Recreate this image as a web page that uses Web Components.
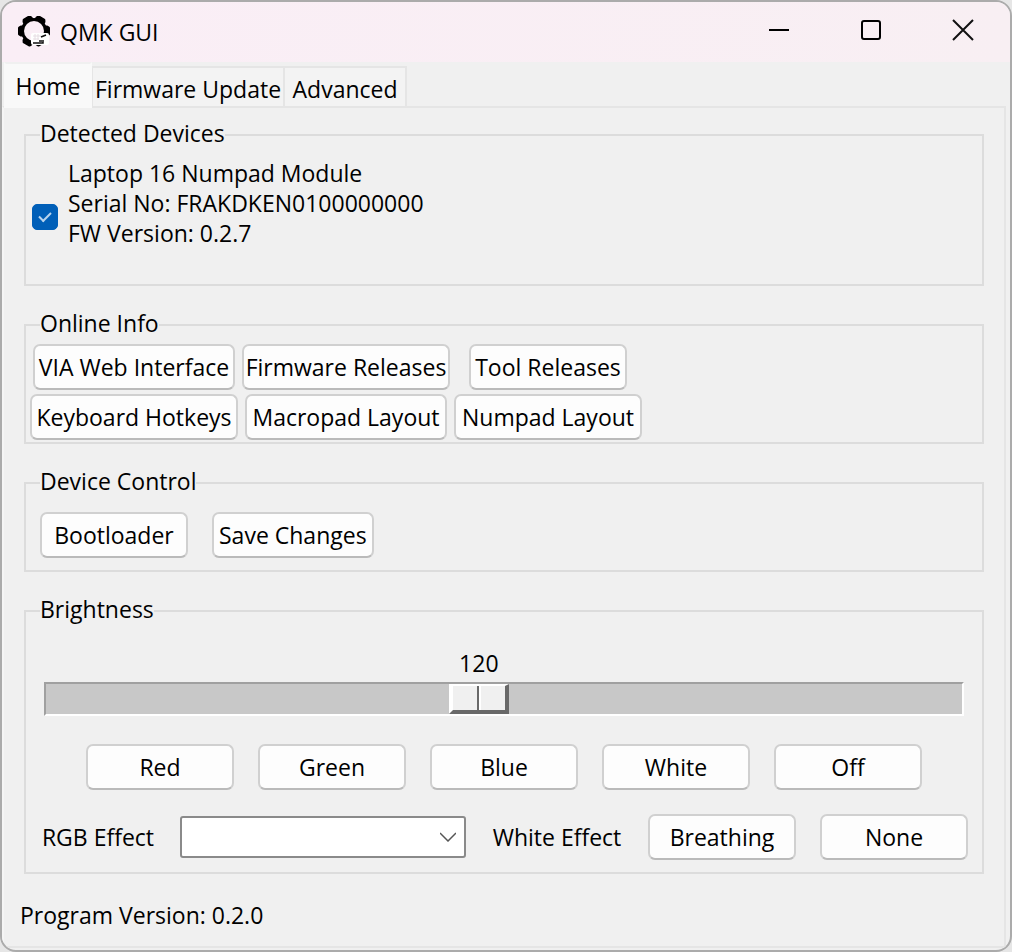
<!DOCTYPE html>
<html lang="en">
<head>
<meta charset="utf-8">
<title>QMK GUI</title>
<style>
html { height: 100%; background: #e6e6e6; }
body { margin: 0; min-height: 100%; display: flex; font: 23px/30px "Open Sans", "Noto Sans", sans-serif; color: #000; }
</style>
</head>
<body>
<qmk-app></qmk-app>
<script>
const define = (name, html, setup) => {
  const tpl = document.createElement('template');
  tpl.innerHTML = html;
  customElements.define(name, class extends HTMLElement {
    constructor() {
      super();
      this.attachShadow({ mode: 'open', delegatesFocus: true }).append(tpl.content.cloneNode(true));
    }
    connectedCallback() { if (setup) setup(this, this.shadowRoot); }
  });
};

define('push-button', `
<style>
:host { display: block; }
button { box-sizing: border-box; width: 100%; height: 46px; padding: 0 var(--button-padding, 6px); margin: 0; font: inherit; color: inherit; white-space: nowrap;
  background: #fdfdfd; border: 2px solid #d0d0d0; border-bottom-color: #bababa; border-radius: 7px; }
button:active { background: #f5f5f5; }
</style>
<button type="button"><slot></slot></button>`);

define('title-bar', `
<style>
:host { display: flex; align-items: center; height: 60px; padding: 0 1px 0 16px; background: linear-gradient(90deg, #faeef6, #f8eff3); }
.logo { width: 32px; height: 32px; flex: none; }
h1 { flex: 1; margin: 0 0 0 10px; font-size: 23px; line-height: 30px; font-weight: 400; }
button { align-self: flex-start; width: 92px; height: 56px; padding: 0; border: 0; background: none; }
button svg { display: block; margin: auto; }
</style>
<svg class="logo" viewBox="0 0 32 32" aria-hidden="true">
  <g transform="translate(16 15)" stroke="#000" stroke-linejoin="round" stroke-width="3">
    <path id="tooth" d="M-13 -4L-14.5 -3V3L-13 4H13L14.5 3V-3L13 -4Z"/>
    <path transform="rotate(60)" d="M-13 -4L-14.5 -3V3L-13 4H13L14.5 3V-3L13 -4Z"/>
    <path transform="rotate(120)" d="M-13 -4L-14.5 -3V3L-13 4H13L14.5 3V-3L13 -4Z"/>
    <circle r="11.5"/>
  </g>
  <circle cx="16" cy="15" r="10" fill="#faeef6"/>
  <rect x="13" y="17" width="18" height="12" rx="2" fill="#fff"/>
  <path d="M15 20h8M15 23h6M17 18v6M20 18v6" stroke="#e6dde3"/>
  <path d="M15 27h10V24M21 25h3M23 21l5-2" fill="none" stroke="#111" stroke-width="1.5"/>
</svg>
<h1>QMK GUI</h1>
<button type="button" aria-label="Minimize"><svg width="22" height="22"><path d="M1 11H21" stroke="#000" stroke-width="2"/></svg></button>
<button type="button" aria-label="Maximize"><svg width="22" height="22"><rect x="2" y="2" width="18" height="18" rx="2" fill="none" stroke="#000" stroke-width="2"/></svg></button>
<button type="button" aria-label="Close"><svg width="22" height="22"><path d="M1 1L21 21M21 1L1 21" stroke="#111" stroke-width="2"/></svg></button>`);

define('tab-bar', `
<style>
:host { display: flex; align-items: flex-end; height: 44px; padding-left: 2px; }
::slotted(button) { height: 42px; min-width: 124px; padding: 4px 2px 0; margin: 0 -2px -2px 0; font: inherit; color: inherit; white-space: nowrap; background: #f3f3f3; border: 2px solid #e5e5e5; }
::slotted(button[aria-selected="true"]) { height: 46px; min-width: 88px; padding: 2px 8px 0; margin: 0 -1px -2px 0; border-color: #f0f0f0 #f9f9f9 #f9f9f9; background: #f9f9f9; position: relative; }
</style>
<slot></slot>`);

define('group-box', `
<style>
:host { display: block; }
fieldset { box-sizing: border-box; min-width: 0; margin: 0; padding: var(--group-padding, 0); border: 2px solid #dcdcdc; }
legend { padding: 0; margin-left: var(--legend-indent, 0); height: 30px; line-height: 26px; }
</style>
<fieldset><legend></legend><slot></slot></fieldset>`,
(el, root) => { root.querySelector('legend').textContent = el.getAttribute('label'); });

define('device-item', `
<style>
:host { display: block; }
label { display: flex; align-items: center; gap: 10px; }
span { min-height: 118px; }
input { appearance: none; flex: none; display: grid; place-items: center; width: 26px; height: 26px; margin: 0; border: 1px solid #8a8a8a; border-radius: 5px; background: #fff; }
input:checked { border-color: #005fb8; background: #005fb8; }
input:checked::before { content: ""; width: 10px; height: 5px; border: solid #b8d4ee; border-width: 0 0 2px 2px; transform: translateY(-2px) rotate(-45deg); }
</style>
<label><input type="checkbox" checked><span><slot></slot></span></label>`);

define('level-slider', `
<style>
:host { display: block; }
output { display: block; width: 60px; margin-left: calc(2px + (100% - 64px) * var(--level)); text-align: center; }
input { appearance: none; display: block; box-sizing: border-box; width: 100%; height: 34px; margin: 4px 0 0; border: 2px solid; border-color: #a0a0a0 #fff #fff #a0a0a0; background: #c8c8c8; }
input::-webkit-slider-thumb { appearance: none; box-sizing: border-box; width: 60px; height: 30px; border: solid; border-color: #fff #696969 #696969 #fff;
  border-width: 2px 4px 4px 4px; background: linear-gradient(#696969, #696969) 24px 0 / 2px 100% no-repeat, linear-gradient(#fff, #fff) 26px 0 / 2px 100% no-repeat, #f0f0f0; }
</style>
<output></output>
<input type="range" min="0" max="255" value="120" aria-label="Brightness">`,
(el, root) => {
  const input = root.querySelector('input');
  const sync = () => {
    root.querySelector('output').textContent = input.value;
    el.style.setProperty('--level', input.value / 255);
  };
  input.addEventListener('input', sync);
  sync();
});

define('effect-row', `
<style>
:host { display: flex; align-items: center; justify-content: center; gap: 24px; }
label, span { width: 116px; text-align: center; white-space: nowrap; }
span { width: 134px; }
.combo { position: relative; flex: 0 0 286px; }
select { appearance: none; display: block; width: 100%; height: 42px; margin: 0; padding: 0 40px 0 8px; font: inherit; background: #fff; border: 2px solid #8a8a8a; border-radius: 3px; }
svg { position: absolute; right: 10px; top: 16px; pointer-events: none; }
push-button { flex: 0 0 148px; }
</style>
<label for="rgb">RGB Effect</label>
<div class="combo"><select id="rgb"><option></option></select>
<svg width="16" height="10"><path d="M0 1L8 9L16 1" fill="none" stroke="#555" stroke-width="1.5"/></svg></div>
<span>White Effect</span>
<push-button>Breathing</push-button>
<push-button>None</push-button>`);

define('qmk-app', `
<style>
:host { flex: 1; display: flex; flex-direction: column; box-sizing: border-box; min-height: 100vh; overflow: hidden; border: 2px solid #ababab; border-radius: 16px; background: #f0f0f0; }
main { flex: 1; display: flex; flex-direction: column; gap: 24px; box-sizing: border-box; margin: 0 4px 2px 0; padding: 12px 20px 0; border: 2px solid #e5e5e5; border-left-color: #f5f5f5; }
.devices { --group-padding: 8px 6px; --legend-indent: 8px; }
.online { --group-padding: 4px 4px 2px; --legend-indent: 10px; }
.control { --group-padding: 14px 14px 12px; }
.bright { --group-padding: 22px 18px 12px; --legend-indent: -4px; }
.links { display: grid; grid-template-columns: 208px 208px 188px; gap: 4px; justify-items: center; --button-padding: 0; }
.wide { width: 208px; }
.medium { width: 202px; }
.narrow { width: 188px; }
.short { width: 158px; }
.row { display: flex; gap: 24px; --button-padding: 5px; }
.row > * { min-width: 148px; }
.colors { justify-content: center; margin: 28px 0 24px; }
effect-row { margin: 0 -4px; }
footer { margin: 2px -4px 0; }
</style>
<title-bar></title-bar>
<tab-bar role="tablist">
  <button type="button" role="tab" aria-selected="true">Home</button>
  <button type="button" role="tab" aria-selected="false">Firmware Update</button>
  <button type="button" role="tab" aria-selected="false">Advanced</button>
</tab-bar>
<main>
  <group-box class="devices" label="Detected Devices">
    <device-item>Laptop 16 Numpad Module<br>Serial No: FRAKDKEN0100000000<br>FW Version: 0.2.7</device-item>
  </group-box>
  <group-box class="online" label="Online Info">
    <div class="links">
      <push-button class="medium">VIA Web Interface</push-button>
      <push-button class="wide">Firmware Releases</push-button>
      <push-button class="short">Tool Releases</push-button>
      <push-button class="wide">Keyboard Hotkeys</push-button>
      <push-button class="medium">Macropad Layout</push-button>
      <push-button class="narrow">Numpad Layout</push-button>
    </div>
  </group-box>
  <group-box class="control" label="Device Control">
    <div class="row"><push-button>Bootloader</push-button><push-button>Save Changes</push-button></div>
  </group-box>
  <group-box class="bright" label="Brightness">
    <level-slider></level-slider>
    <div class="row colors">
      <push-button>Red</push-button><push-button>Green</push-button><push-button>Blue</push-button><push-button>White</push-button><push-button>Off</push-button>
    </div>
    <effect-row></effect-row>
  </group-box>
  <footer>Program Version: 0.2.0</footer>
</main>`);
</script>
</body>
</html>
